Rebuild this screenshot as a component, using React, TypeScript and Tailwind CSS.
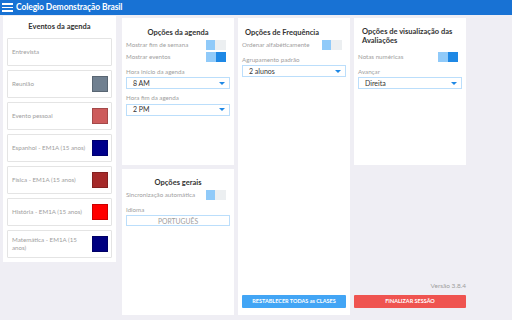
import React from 'react';

const eventos = [
  { name: 'Entrevista', color: null },
  { name: 'Reunião', color: '#708090' },
  { name: 'Evento pessoal', color: '#cd5c5c' },
  { name: 'Espanhol - EM1A (15 anos)', color: '#00008b' },
  { name: 'Física - EM1A (15 anos)', color: '#a52a2a' },
  { name: 'História - EM1A (15 anos)', color: '#ff0000' },
  { name: 'Matemática - EM1A (15 anos)', color: '#000080' },
];

function Toggle({ on }: { on: boolean }) {
  if (on) {
    return (
      <div className="flex h-[10px] w-[20px] justify-end bg-[#90caf9]">
        <div className="h-full w-[10px] bg-[#1e88e5]" />
      </div>
    );
  }
  return (
    <div className="flex h-[10px] w-[20px] bg-[#eceff1]">
      <div className="h-full w-[9px] bg-[#90caf9]" />
    </div>
  );
}

function Select({ value }: { value: string }) {
  return (
    <div className="flex h-[12px] items-center justify-between border border-[#bbdefb] bg-white pl-[6px] pr-[4px] text-[7px] text-[#333]">
      <span>{value}</span>
      <span className="h-0 w-0 border-x-[3px] border-t-[3px] border-x-transparent border-t-[#1e88e5]" />
    </div>
  );
}

function ToggleRow({ label, on }: { label: string; on: boolean }) {
  return (
    <div className="flex h-[12px] items-center justify-between pr-[4px]">
      <span className="text-[6.2px] text-[#9e9e9e]">{label}</span>
      <Toggle on={on} />
    </div>
  );
}

function Label({ children }: { children: React.ReactNode }) {
  return <div className="mb-[1px] mt-[4px] text-[6.2px] text-[#9e9e9e]">{children}</div>;
}

export default function App() {
  return (
    <div className="flex h-[320px] w-[512px] flex-col overflow-hidden bg-[#efeef4] font-['Lato','Liberation_Sans',sans-serif]">
      {/* header */}
      <div className="flex h-[15px] shrink-0 items-center gap-[3px] bg-[#1872d4] pl-[2px]">
        <div className="flex w-[11px] flex-col gap-[2px]">
          <div className="h-[1.5px] bg-white" />
          <div className="h-[1.5px] bg-white" />
          <div className="h-[1.5px] bg-white" />
        </div>
        <span className="text-[8.5px] font-bold tracking-[-0.1px] text-white">Colegio Demonstração Brasil</span>
      </div>

      <div className="flex items-start">
        {/* eventos */}
        <div className="ml-[3px] mt-[1px] flex w-[113px] flex-col bg-white px-[4px] pb-[4px]">
          <div className="flex h-[22px] items-center justify-center text-[7.5px] font-bold text-[#333]">
            Eventos da agenda
          </div>
          <div className="flex flex-col gap-[4px]">
            {eventos.map((e) => (
              <div
                key={e.name}
                className="flex h-[28px] items-center justify-between rounded-[1px] border border-[#e4e4e4] bg-white pl-[4px] pr-[3px]"
              >
                <span className="w-[74px] text-[6.2px] leading-[8px] text-[#9e9e9e]">{e.name}</span>
                {e.color && (
                  <div className="h-[16px] w-[16px] border border-black/20" style={{ backgroundColor: e.color }} />
                )}
              </div>
            ))}
          </div>
        </div>

        {/* agenda + gerais */}
        <div className="ml-[6px] mt-[3px] flex w-[112px] flex-col gap-[4px]">
          <div className="flex h-[147px] flex-col bg-white px-[4px]">
            <div className="flex h-[21px] items-end justify-center pb-[1px] text-[7.5px] font-bold text-[#333]">
              Opções da agenda
            </div>
            <ToggleRow label="Mostrar fim de semana" on={false} />
            <ToggleRow label="Mostrar eventos" on={true} />
            <Label>Hora início da agenda</Label>
            <Select value="8 AM" />
            <Label>Hora fim da agenda</Label>
            <Select value="2 PM" />
          </div>
          <div className="flex h-[146px] flex-col bg-white px-[4px]">
            <div className="flex h-[20px] items-end justify-center pb-[1px] text-[7.5px] font-bold text-[#333]">
              Opções gerais
            </div>
            <ToggleRow label="Sincronização automática" on={false} />
            <Label>Idioma</Label>
            <div className="flex h-[11px] items-center justify-center border border-[#bbdefb] text-[6.8px] text-[#9e9e9e]">
              PORTUGUÊS
            </div>
          </div>
        </div>

        {/* frequencia */}
        <div className="ml-[4px] mt-[3px] flex h-[297px] w-[112px] flex-col bg-white px-[4px] pb-[7px]">
          <div className="flex h-[21px] items-end pb-[1px] pl-[3px] text-[7.5px] font-bold text-[#333]">
            Opções de Frequência
          </div>
          <ToggleRow label="Ordenar alfabéticamente" on={false} />
          <Label>Agrupamento padrão</Label>
          <Select value="2 alunos" />
          <div className="flex-1" />
          <button className="h-[13px] rounded-[1px] bg-[#42a5f5] text-[5.5px] font-bold text-white">
            RESTABLECER TODAS as CLASES
          </button>
        </div>

        {/* avaliacoes */}
        <div className="ml-[4px] mt-[3px] flex h-[297px] w-[112px] flex-col pb-[7px]">
          <div className="flex h-[147px] flex-col bg-white px-[4px]">
            <div className="pl-[4px] pt-[9px] text-[7.5px] font-bold leading-[9px] text-[#333]">
              Opções de visualização das Avaliações
            </div>
            <div className="mt-[6px]">
              <ToggleRow label="Notas numéricas" on={true} />
            </div>
            <Label>Avançar</Label>
            <Select value="Direita" />
          </div>
          <div className="flex-1" />
          <div className="mb-[4px] text-right text-[6.5px] text-[#9e9e9e]">Versão 3.8.4</div>
          <button className="h-[13px] rounded-[1px] bg-[#ef5350] text-[5.5px] font-bold text-white">
            FINALIZAR SESSÃO
          </button>
        </div>
      </div>
    </div>
  );
}
